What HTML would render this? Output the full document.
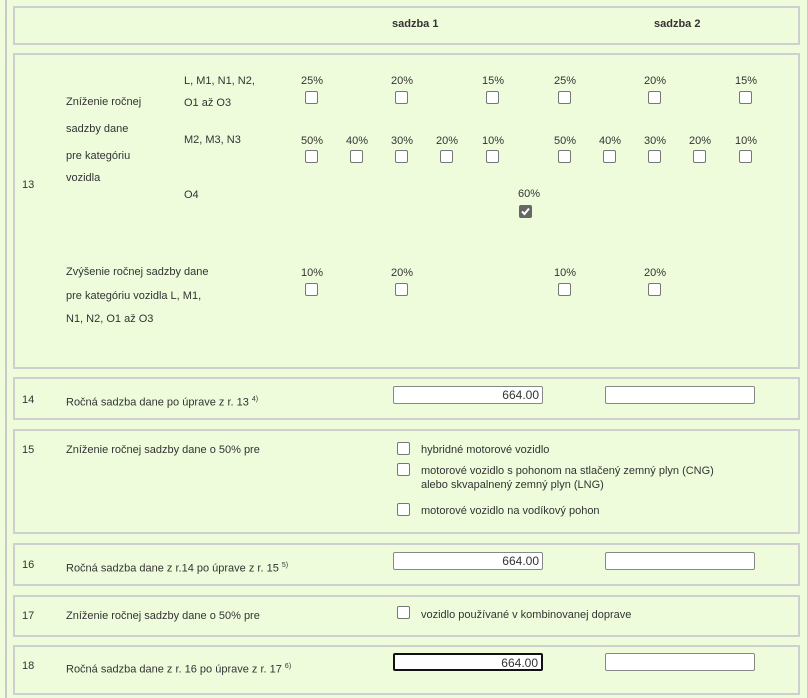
<!DOCTYPE html>
<html><head><meta charset="utf-8"><style>
body{margin:0;width:808px;height:689px;background:#eefcdc;font-family:"Liberation Sans",Arial,sans-serif;font-size:11px;color:#333;position:relative;overflow:hidden}
.frame{position:absolute;left:5px;top:-2px;width:800px;height:700px;border-left:2px solid #cacaca;border-right:2px solid #cacaca}
.p{position:absolute;left:13px;width:787px;border:2px solid #cfcfcf;box-sizing:border-box}
.t{position:absolute;white-space:nowrap;line-height:14px}
.c{position:absolute;width:11px;height:11px;border:1px solid #777;border-radius:2px;background:#fff}
.ck{background:#666;border-color:#666}
.in{position:absolute;height:18px;width:150px;border:1px solid #888;border-radius:2px;background:#fff;box-sizing:border-box;text-align:right;padding-right:3px;line-height:16px;font-size:12px}
.b{font-weight:bold}
sup{font-size:7px}
</style></head><body>
<div class="frame"></div>
<div class="p" style="top:6px;height:39px"></div>
<div class="t b" style="left:392px;top:17px">sadzba 1</div>
<div class="t b" style="left:654px;top:17px">sadzba 2</div>

<div class="p" style="top:53px;height:316px"></div>
<div class="t" style="left:22px;top:178px">13</div>
<div class="t" style="left:66px;top:95px">Zníženie ročnej</div>
<div class="t" style="left:66px;top:122px">sadzby dane</div>
<div class="t" style="left:66px;top:149px">pre kategóriu</div>
<div class="t" style="left:66px;top:171px">vozidla</div>
<div class="t" style="left:184px;top:74px">L, M1, N1, N2,</div>
<div class="t" style="left:184px;top:96px">O1 až O3</div>
<div class="t" style="left:184px;top:133px">M2, M3, N3</div>
<div class="t" style="left:184px;top:188px">O4</div>

<div class="t" style="left:301px;top:74px">25%</div><div class="c" style="left:305px;top:91px"></div>
<div class="t" style="left:391px;top:74px">20%</div><div class="c" style="left:395px;top:91px"></div>
<div class="t" style="left:482px;top:74px">15%</div><div class="c" style="left:486px;top:91px"></div>
<div class="t" style="left:554px;top:74px">25%</div><div class="c" style="left:558px;top:91px"></div>
<div class="t" style="left:644px;top:74px">20%</div><div class="c" style="left:648px;top:91px"></div>
<div class="t" style="left:735px;top:74px">15%</div><div class="c" style="left:739px;top:91px"></div>

<div class="t" style="left:301px;top:134px">50%</div><div class="c" style="left:305px;top:150px"></div>
<div class="t" style="left:346px;top:134px">40%</div><div class="c" style="left:350px;top:150px"></div>
<div class="t" style="left:391px;top:134px">30%</div><div class="c" style="left:395px;top:150px"></div>
<div class="t" style="left:436px;top:134px">20%</div><div class="c" style="left:440px;top:150px"></div>
<div class="t" style="left:482px;top:134px">10%</div><div class="c" style="left:486px;top:150px"></div>
<div class="t" style="left:554px;top:134px">50%</div><div class="c" style="left:558px;top:150px"></div>
<div class="t" style="left:599px;top:134px">40%</div><div class="c" style="left:603px;top:150px"></div>
<div class="t" style="left:644px;top:134px">30%</div><div class="c" style="left:648px;top:150px"></div>
<div class="t" style="left:689px;top:134px">20%</div><div class="c" style="left:693px;top:150px"></div>
<div class="t" style="left:735px;top:134px">10%</div><div class="c" style="left:739px;top:150px"></div>

<div class="t" style="left:518px;top:187px">60%</div>
<div class="c ck" style="left:519px;top:205px"><svg width="11" height="11" viewBox="0 0 11 11" style="position:absolute;left:0;top:0"><path d="M2 5.5L4.5 8L9 2.5" stroke="#fff" stroke-width="2" fill="none"/></svg></div>

<div class="t" style="left:66px;top:265px">Zvýšenie ročnej sadzby dane</div>
<div class="t" style="left:66px;top:289px">pre kategóriu vozidla L, M1,</div>
<div class="t" style="left:66px;top:312px">N1, N2, O1 až O3</div>
<div class="t" style="left:301px;top:266px">10%</div><div class="c" style="left:305px;top:283px"></div>
<div class="t" style="left:391px;top:266px">20%</div><div class="c" style="left:395px;top:283px"></div>
<div class="t" style="left:554px;top:266px">10%</div><div class="c" style="left:558px;top:283px"></div>
<div class="t" style="left:644px;top:266px">20%</div><div class="c" style="left:648px;top:283px"></div>

<div class="p" style="top:377px;height:43px"></div>
<div class="t" style="left:22px;top:393px">14</div>
<div class="t" style="left:66px;top:393px">Ročná sadzba dane po úprave z r. 13 <sup>4)</sup></div>
<div class="in" style="left:393px;top:386px">664.00</div>
<div class="in" style="left:605px;top:386px"></div>

<div class="p" style="top:429px;height:105px"></div>
<div class="t" style="left:22px;top:443px">15</div>
<div class="t" style="left:66px;top:443px">Zníženie ročnej sadzby dane o 50% pre</div>
<div class="c" style="left:397px;top:442px"></div><div class="t" style="left:421px;top:443px">hybridné motorové vozidlo</div>
<div class="c" style="left:397px;top:463px"></div><div class="t" style="left:421px;top:464px">motorové vozidlo s pohonom na stlačený zemný plyn (CNG)</div>
<div class="t" style="left:421px;top:478px">alebo skvapalnený zemný plyn (LNG)</div>
<div class="c" style="left:397px;top:503px"></div><div class="t" style="left:421px;top:504px">motorové vozidlo na vodíkový pohon</div>

<div class="p" style="top:543px;height:43px"></div>
<div class="t" style="left:22px;top:558px">16</div>
<div class="t" style="left:66px;top:559px">Ročná sadzba dane z r.14 po úprave z r. 15 <sup>5)</sup></div>
<div class="in" style="left:393px;top:552px">664.00</div>
<div class="in" style="left:605px;top:552px"></div>

<div class="p" style="top:595px;height:42px"></div>
<div class="t" style="left:22px;top:609px">17</div>
<div class="t" style="left:66px;top:609px">Zníženie ročnej sadzby dane o 50% pre</div>
<div class="c" style="left:397px;top:606px"></div><div class="t" style="left:421px;top:608px">vozidlo používané v kombinovanej doprave</div>

<div class="p" style="top:645px;height:50px"></div>
<div class="t" style="left:22px;top:659px">18</div>
<div class="t" style="left:66px;top:660px">Ročná sadzba dane z r. 16 po úprave z r. 17 <sup>6)</sup></div>
<div class="in" style="left:393px;top:653px;border:2px solid #111">664.00</div>
<div class="in" style="left:605px;top:653px"></div>
</body></html>
